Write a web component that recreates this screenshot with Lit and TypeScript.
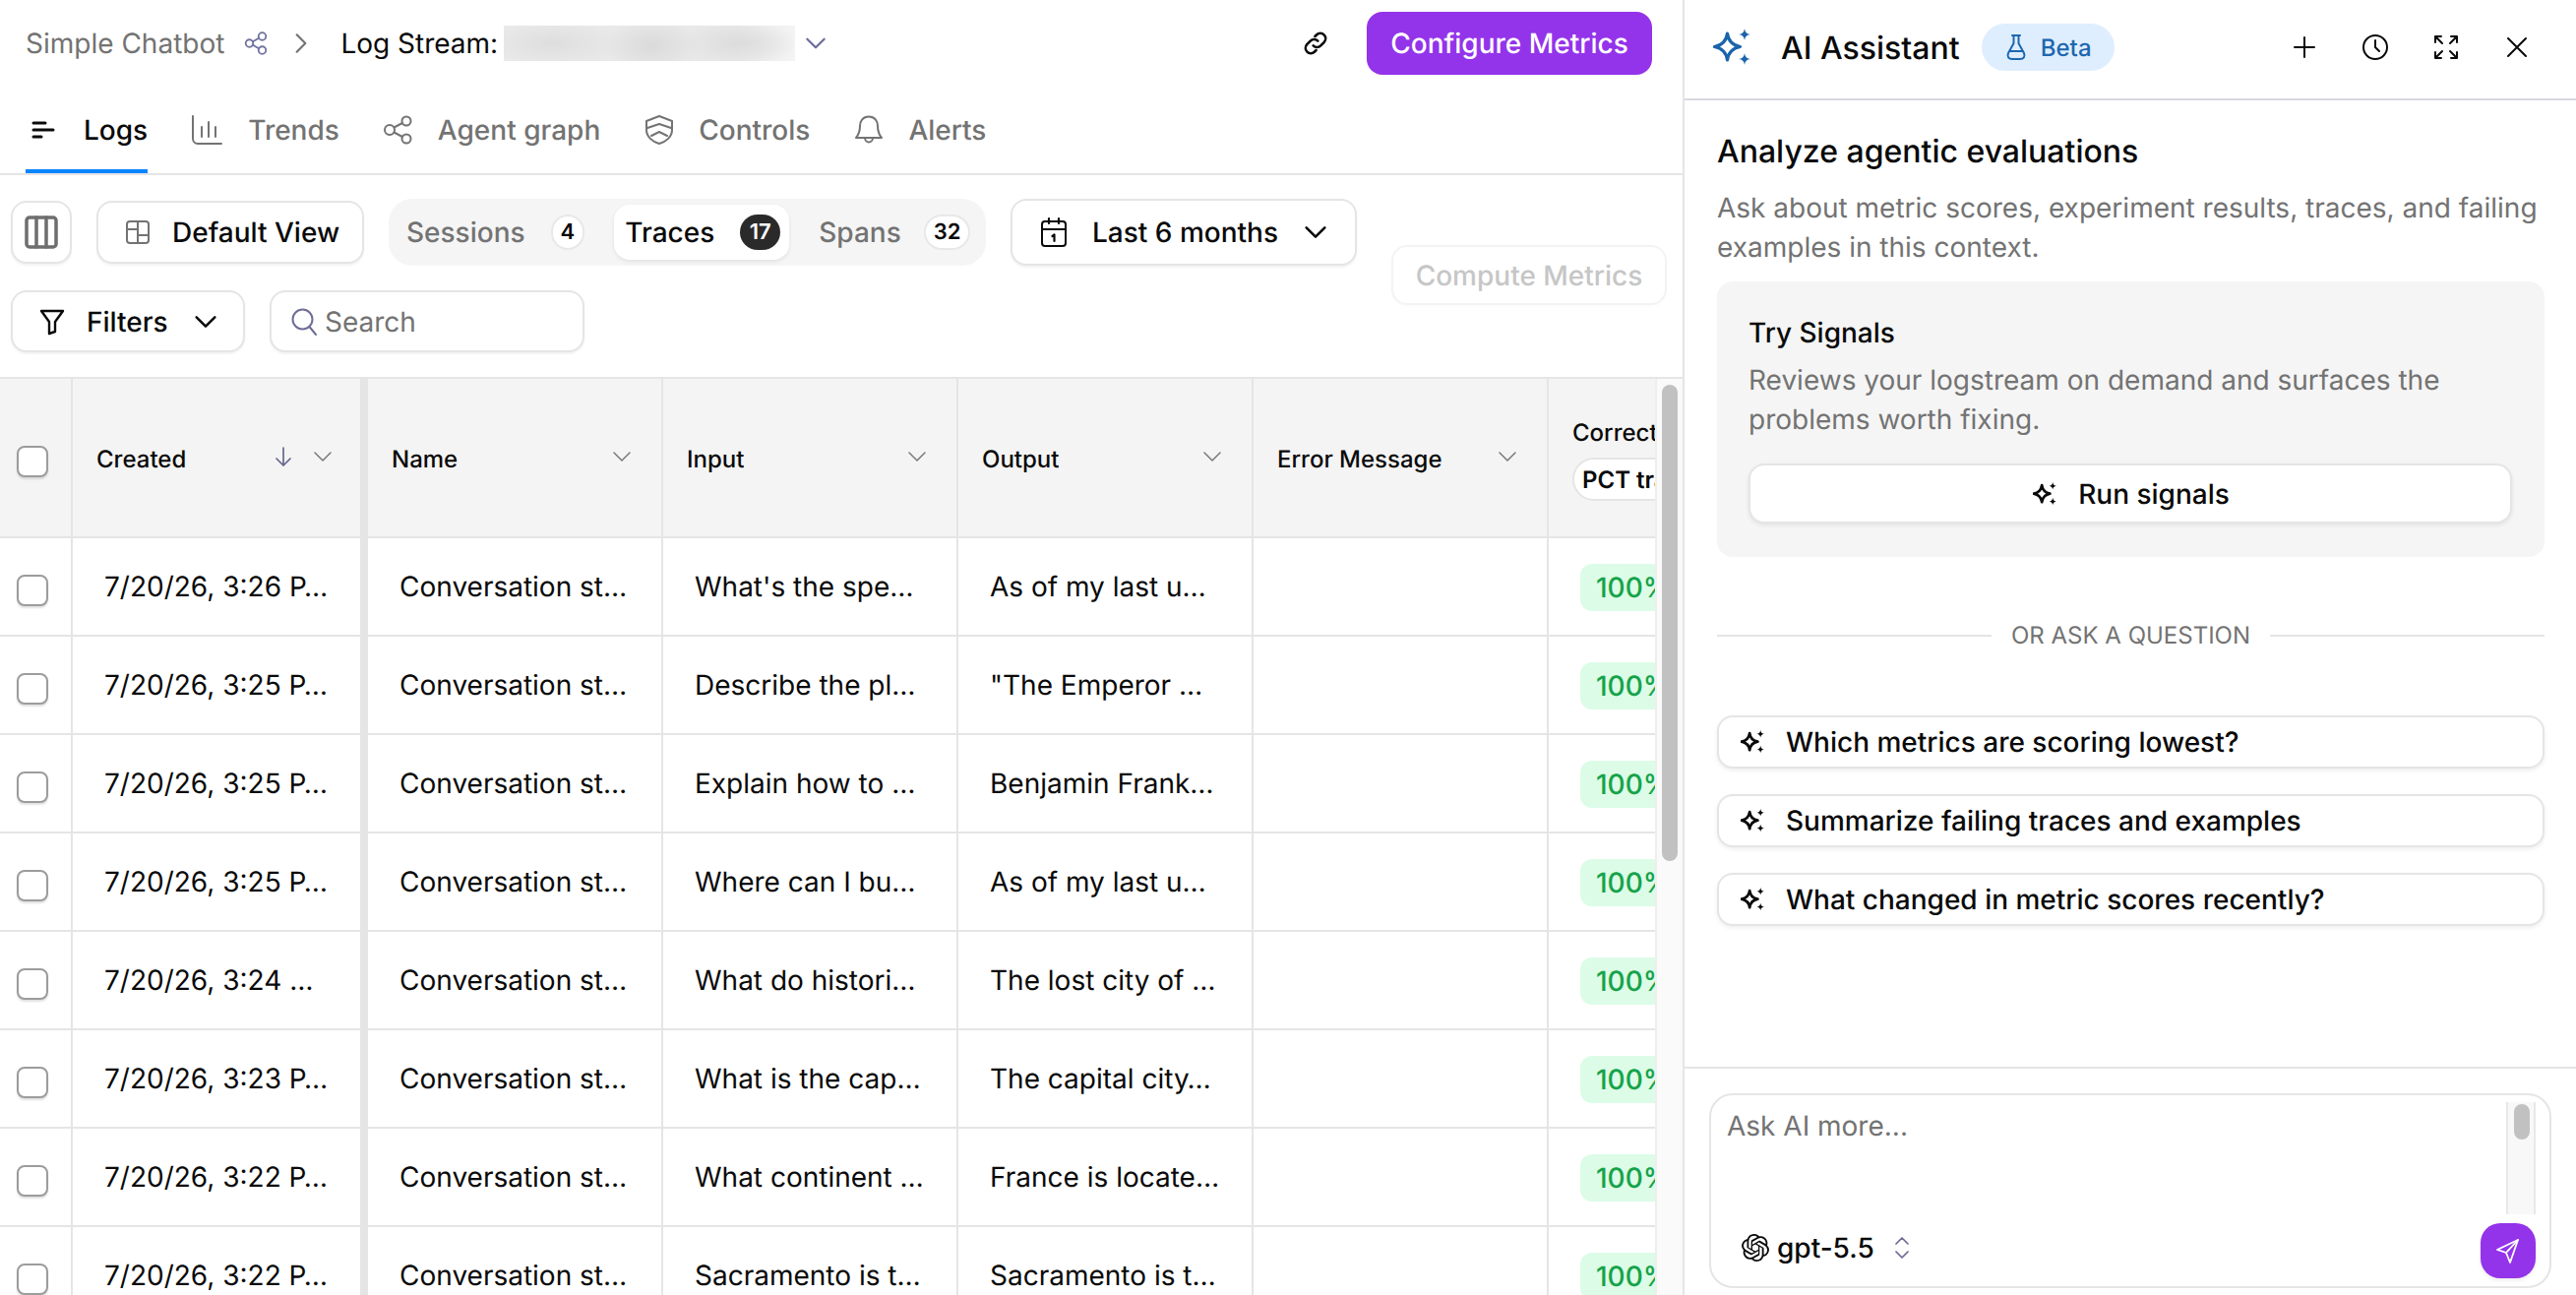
import { LitElement, html, css } from "lit";
import { customElement } from "lit/decorators.js";

const sparkle = html`<svg class="spark" viewBox="0 0 38 38"><path class="sbig" d="M14.500 5C15.500 12.500 20 17 27.500 18.500C20 20 15.500 24.500 14.500 32C13.500 24.500 9 20 1.500 18.500C9 17 13.500 12.500 14.500 5Z"/><path class="ssm" d="M32 0C32.400 3.600 34.400 5.600 38 6C34.400 6.400 32.400 8.400 32 12C31.600 8.400 29.600 6.400 26 6C29.600 5.600 31.600 3.600 32 0Z"/><path class="ssm" d="M32 25C32.400 28.600 34.400 30.600 38 31C34.400 31.400 32.400 33.400 32 37C31.600 33.400 29.600 31.400 26 31C29.600 30.600 31.600 28.600 32 25Z"/></svg>`;
const chev = html`<svg class="chev" viewBox="0 0 24 24"><path d="M4 8L12 16L20 8"/></svg>`;
const rows = [
  ["7/20/26, 3:26 P…", "What's the spe…", "As of my last u…"],
  ["7/20/26, 3:25 P…", "Describe the pl…", "\"The Emperor …"],
  ["7/20/26, 3:25 P…", "Explain how to …", "Benjamin Frank…"],
  ["7/20/26, 3:25 P…", "Where can I bu…", "As of my last u…"],
  ["7/20/26, 3:24 …", "What do histori…", "The lost city of …"],
  ["7/20/26, 3:23 P…", "What is the cap…", "The capital city…"],
  ["7/20/26, 3:22 P…", "What continent …", "France is locate…"],
  ["7/20/26, 3:22 P…", "Sacramento is t…", "Sacramento is t…"],
];
const questions = ["Which metrics are scoring lowest?", "Summarize failing traces and examples", "What changed in metric scores recently?"];

@customElement("app-root")
export class AppRoot extends LitElement {
  static styles = css`
    :host { display: flex; width: 2618px; height: 1316px; overflow: hidden; background: #fff; color: #0a0a0a; font-family: Inter, "Liberation Sans", sans-serif; font-size: 28px; text-rendering: geometricPrecision; }
    * { box-sizing: border-box; }
    svg { display: block; flex: none; fill: none; stroke: currentColor; stroke-width: 2; stroke-linecap: round; stroke-linejoin: round; }
    .left { width: 1712px; height: 1316px; border-right: 2px solid #e5e5e5; display: flex; flex-direction: column; overflow: hidden; flex: none; }
    .top { height: 88px; flex: none; display: flex; align-items: center; padding: 0 31px 0 26px; }
    .crumb { color: #737373; white-space: nowrap; }
    .share { width: 26px; height: 26px; margin-left: 19px; color: #7272a0; stroke-width: 1.700; }
    .crumbsep { width: 26px; height: 26px; margin: 0 27px 0 20px; color: #737373; }
    .stream { white-space: nowrap; font-weight: 400; }
    .blur { width: 296px; height: 36px; margin-left: 6px; background: radial-gradient(ellipse 50px 26px at 150px 20px, #dadada, transparent), radial-gradient(ellipse 60px 22px at 240px 18px, #dcdcdc, transparent), radial-gradient(ellipse 70px 24px at 50px 18px, #dedede, transparent), linear-gradient(90deg, #eaeaea, #e8e8e8 80%, #f4f4f4); }
    .downc { width: 26px; height: 26px; margin-left: 8px; color: #6b6b9b; }
    .spacer { flex: 1; }
    .link { width: 28px; height: 28px; margin-right: 38px; stroke-width: 2.200; }
    .cta { height: 64px; width: 290px; border-radius: 16px; background: #9333ea; color: #fff; font-weight: 500; display: flex; align-items: center; justify-content: center; white-space: nowrap; }
    .tabs { height: 90px; flex: none; display: flex; border-bottom: 2px solid #e5e5e5; padding-left: 26px; gap: 44px; }
    .tab { display: flex; align-items: center; gap: 24px; color: #737373; font-weight: 500; white-space: nowrap; height: 88px; }
    .tab:nth-child(2) { gap: 26px; }
    .tab svg { width: 32px; height: 32px; margin-top: -1px; }
    .tab.on { color: #0a0a0a; border-bottom: 4px solid #0a84ff; padding-top: 4px; gap: 27px; }
    .tab.on svg { color: #0a0a0a; }
    .toolbar { height: 205px; flex: none; padding: 24px 16px 0 11px; display: flex; justify-content: space-between; align-items: flex-start; }
    .tcol { display: flex; flex-direction: column; gap: 25px; }
    .trow { display: flex; align-items: center; gap: 25px; height: 68px; }
    .trow.two { height: 63px; gap: 25px; }
    .btn { display: flex; align-items: center; height: 64px; border: 2px solid #e5e5e5; border-radius: 16px; background: #fff; box-shadow: 0 2px 2px rgba(0,0,0,.05); font-weight: 500; white-space: nowrap; }
    .cols { width: 62px; justify-content: center; color: #6e6e6e; }
    .cols svg { width: 36px; height: 36px; }
    .view { width: 272px; padding-left: 26px; gap: 21px; }
    .view svg { width: 28px; height: 28px; color: #737373; }
    .seg { height: 68px; background: #f5f5f5; border-radius: 24px; display: flex; align-items: center; gap: 18px; padding: 0 8px 0 6px; width: 607px; }
    .sitem { display: flex; align-items: center; gap: 26px; height: 56px; padding: 0 12px; border-radius: 16px; color: #737373; font-weight: 500; white-space: nowrap; }
    .sitem.on { background: #fff; color: #0a0a0a; box-shadow: 0 2px 4px rgba(0,0,0,.08); padding: 0 9px 0 11px; }
    .sitem:last-child { gap: 23px; }
    .bdg { height: 36px; min-width: 32px; padding: 0 8px; border-radius: 18px; background: #fff; border: 2px solid #e8e8e8; color: #0a0a0a; font-size: 22px; font-weight: 600; display: flex; align-items: center; justify-content: center; }
    .bdg.dark { background: #2a2a2a; color: #fff; border: none; width: 41px; }
    .date { height: 68px; width: 352px; padding-left: 27px; gap: 24px; }
    .date svg.cal { width: 30px; height: 32px; }
    .date .chev { width: 28px; height: 28px; color: #0a0a0a; stroke-width: 2.200; }
    .filters { width: 238px; height: 63px; padding-left: 26px; gap: 21px; }
    .filters .fn { width: 28px; height: 28px; }
    .filters .chev { width: 28px; height: 28px; margin-left: 3px; stroke-width: 2.200; }
    .search { width: 320px; height: 63px; padding-left: 19px; gap: 7px; color: #737373; font-weight: 400; }
    .search svg { width: 28px; height: 30px; color: #6e6e96; }
    .compute { width: 280px; height: 61px; margin-top: 47px; border: 2px solid #f3f3f3; border-radius: 16px; color: #c6c6c6; font-weight: 500; display: flex; align-items: center; justify-content: center; white-space: nowrap; box-shadow: 0 2px 2px rgba(0,0,0,.015); }
    .tablewrap { flex: 1; min-height: 0; display: flex; border-top: 2px solid #e5e5e5; overflow: hidden; }
    .grid { width: 1682px; flex: none; overflow: hidden; }
    .row { display: flex; width: 1874px; height: 100px; border-bottom: 2px solid #e5e5e5; align-items: stretch; }
    .row.head { height: 162px; background: #f4f4f4; font-size: 24px; font-weight: 500; }
    .cell { flex: none; width: 300px; border-right: 2px solid #e5e5e5; display: flex; align-items: center; padding-left: 32px; white-space: nowrap; overflow: hidden; }
    .cell.ck { width: 74px; padding-left: 17px; }
    .cell.created { border-right-width: 8px; }
    .head .cell { padding: 2px 28px 0 24px; justify-content: space-between; }
    .head .cell.created { padding-right: 26px; }
    .head .cell.ck { padding: 0 0 0 17px; justify-content: flex-start; }
    .head .chev { width: 24px; height: 24px; color: #777; stroke-width: 1.500; margin-top: -4px; }
    .hicons { display: flex; align-items: center; gap: 16px; }
    .arrow { width: 24px; height: 24px; color: #66668f; stroke-width: 1.700; margin-top: -4px; }
    .box { width: 32px; height: 32px; margin-top: 7px; border: 2px solid #9c9c9c; border-radius: 8px; background: #fff; box-shadow: 0 2px 2px rgba(0,0,0,.12); }
    .head .cell.corr { flex-direction: column; align-items: flex-start; justify-content: flex-start; padding: 28px 0 0 24px; border-right: none; }
    .corrt { line-height: 36px; margin-top: 9px; }
    .pct { height: 44px; margin-top: 7px; border: 2px solid #e5e5e5; border-radius: 22px; background: #fff; display: flex; align-items: center; padding: 0 8px; font-weight: 600; white-space: nowrap; }
    .score { height: 48px; margin-top: 2px; padding: 0 16px; border-radius: 12px; background: #dcfce7; color: #16a34a; font-weight: 500; display: flex; align-items: center; }
    .track { width: 28px; flex: none; background: #fafafa; border-left: 2px solid #eeeeee; padding: 6px 5px 0 5px; }
    .thumb { width: 16px; height: 484px; border-radius: 8px; background: #c1c1c1; }
    .right { flex: 1; min-width: 0; height: 1316px; display: flex; flex-direction: column; }
    .rhead { height: 102px; flex: none; border-bottom: 2px solid #d8d8e2; display: flex; align-items: center; padding: 0 46px 4px 29px; }
    .rlogo { width: 38px; height: 38px; color: #1b64ac; }
    .spark { width: 100%; height: 100%; }
    .sbig { stroke-width: 3.200; } .ssm { fill: currentColor; stroke: none; }
    .rtitle { margin-left: 31px; font-size: 32px; font-weight: 500; white-space: nowrap; }
    .beta { margin-left: 22px; height: 48px; width: 135px; border-radius: 24px; background: #dfeefe; color: #1c67b0; display: flex; align-items: center; justify-content: center; gap: 13px; font-size: 24px; font-weight: 500; }
    .beta svg { width: 24px; height: 28px; stroke-width: 2; }
    .ricons { display: flex; gap: 44px; }
    .ricons svg { width: 28px; height: 28px; stroke-width: 2; }
    .rbody { flex: 1; min-height: 0; padding: 32px 32px 0 33px; }
    .h2 { font-size: 32px; font-weight: 500; line-height: 40px; }
    .desc { color: #737373; line-height: 40px; margin-top: 17px; }
    .card { margin-top: 15px; height: 280px; border-radius: 16px; background: #f5f5f5; padding: 32px 33px 0 32px; }
    .card h3 { margin: 0; font-size: 28px; font-weight: 500; line-height: 40px; }
    .card p { margin: 8px 0 0; color: #737373; line-height: 40px; }
    .run { margin-top: 25px; height: 61px; border: 2px solid #e5e5e5; border-radius: 16px; background: #fff; box-shadow: 0 2px 4px rgba(0,0,0,.08); display: flex; align-items: center; justify-content: center; gap: 22px; font-weight: 500; padding-left: 2px; }
    .small { width: 24px; height: 24px; }
    .small .sbig { stroke-width: 4.400; }
    .divider { margin-top: 60px; display: flex; align-items: center; gap: 20px; color: #737373; font-size: 24px; line-height: 40px; white-space: nowrap; }
    .divider i { flex: 1; height: 2px; background: #e5e5e5; }
    .qs { margin-top: 61px; display: flex; flex-direction: column; gap: 26px; }
    .q { height: 54px; border: 2px solid #e5e5e5; border-radius: 16px; background: #fff; box-shadow: 0 2px 4px rgba(0,0,0,.07); display: flex; align-items: center; gap: 22px; padding-left: 22px; font-weight: 500; white-space: nowrap; }
    .rfoot { height: 232px; flex: none; border-top: 2px solid #e5e5e5; padding: 25px 25px 7px 25px; }
    .inbox { height: 198px; border: 2px solid #e5e5e5; border-radius: 24px; padding: 7px 14px 0 16px; display: flex; flex-direction: column; }
    .intop { height: 114px; flex: none; display: flex; justify-content: space-between; }
    .ph { color: #737373; line-height: 40px; margin-top: 4px; }
    .sb { width: 30px; height: 114px; background: #f8f8f8; border-left: 2px solid #e8e8e8; border-right: 2px solid #e8e8e8; padding: 2px 6px; }
    .sb div { width: 16px; height: 36px; border-radius: 8px; background: #c1c1c1; }
    .inbot { margin-top: 9px; display: flex; align-items: center; height: 56px; padding-left: 15px; }
    .oai { width: 28px; height: 30px; fill: #0a0a0a; stroke: none; margin-top: -6px; }
    .model { margin-left: 8px; margin-top: -7px; font-weight: 500; }
    .updown { width: 20px; height: 24px; margin-left: 18px; margin-top: -6px; color: #6b6b95; stroke-width: 1.700; }
    .send { margin-left: auto; width: 56px; height: 56px; border-radius: 20px; background: #9333ea; color: #fff; display: flex; align-items: center; justify-content: center; box-shadow: 0 2px 4px rgba(0,0,0,.08); }
    .send svg { width: 30px; height: 30px; stroke-width: 1.800; }
  `;

  render() {
    return html`
      <div class="left">
        <div class="top">
          <span class="crumb">Simple Chatbot</span>
          <svg class="share" viewBox="0 0 24 24"><circle cx="6" cy="12" r="3.500"/><circle cx="18" cy="5.500" r="3.500"/><circle cx="18" cy="18.500" r="3.500"/><path d="M9.200 10.400L14.800 7.100M9.200 13.600L14.800 16.900"/></svg>
          <svg class="crumbsep" viewBox="0 0 24 24"><path d="M8 4L16 12L8 20"/></svg>
          <span class="stream">Log Stream:</span>
          <div class="blur"></div>
          <svg class="downc" viewBox="0 0 24 24"><path d="M4 8L12 16L20 8"/></svg>
          <div class="spacer"></div>
          <svg class="link" viewBox="0 0 24 24"><path d="M10 14a4.500 4.500 0 0 0 6.500 0l3-3a4.600 4.600 0 0 0-6.500-6.500l-1.500 1.500"/><path d="M14 10a4.500 4.500 0 0 0-6.500 0l-3 3a4.600 4.600 0 0 0 6.500 6.500l1.500-1.500"/></svg>
          <div class="cta">Configure Metrics</div>
        </div>
        <div class="tabs">
          <div class="tab on"><svg viewBox="0 0 32 32"><path d="M8 9H20M8 16H28M8 23H16" stroke-width="3"/></svg>Logs</div>
          <div class="tab"><svg viewBox="0 0 32 32"><path d="M2 2V25a5 5 0 0 0 5 5H31M11 13V23M18 8V23M25 13V23" /></svg>Trends</div>
          <div class="tab"><svg viewBox="0 0 32 32"><circle cx="7" cy="16" r="5"/><circle cx="24" cy="7" r="4.500"/><circle cx="24" cy="25" r="4.500"/><path d="M11.500 13.500L20 9M11.500 18.500L20 23"/></svg>Agent graph</div>
          <div class="tab"><svg viewBox="0 0 32 32"><path d="M16 2L29 7V16C29 23 23 28 16 30C9 28 3 23 3 16V7Z"/><path d="M4 14L16 10L28 14M8 22L16 18L24 22"/></svg>Controls</div>
          <div class="tab"><svg viewBox="0 0 32 32"><path d="M16 2.500C10 2.500 7 7 7 12C7 18 5.500 21 3 24H29C26.500 21 25 18 25 12C25 7 22 2.500 16 2.500Z"/><path d="M12 24a4 4.500 0 0 0 8 0"/></svg>Alerts</div>
        </div>
        <div class="toolbar">
          <div class="tcol">
            <div class="trow">
              <div class="btn cols"><svg viewBox="0 0 36 36"><rect x="3" y="3" width="30" height="30" rx="3" stroke-width="3.500"/><path d="M13 3V33M23 3V33" stroke-width="3.500"/></svg></div>
              <div class="btn view"><svg viewBox="0 0 28 28"><rect x="3" y="3" width="22" height="22" rx="3"/><path d="M3 11H14M14 3V25M14 17H25"/></svg>Default View</div>
              <div class="seg">
                <div class="sitem">Sessions<span class="bdg">4</span></div>
                <div class="sitem on">Traces<span class="bdg dark">17</span></div>
                <div class="sitem">Spans<span class="bdg">32</span></div>
              </div>
              <div class="btn date"><svg class="cal" viewBox="0 0 30 32"><rect x="3" y="5" width="24" height="25" rx="3"/><path d="M3 13H27M10 2V7M20 2V7M13.500 20L15.500 18.500V25" stroke-width="2.200"/></svg>Last 6 months${chev}</div>
            </div>
            <div class="trow two">
              <div class="btn filters"><svg class="fn" viewBox="0 0 28 28"><path d="M3 3H25L17 14V24L11 26V14Z" stroke-width="2.400"/></svg>Filters${chev}</div>
              <div class="btn search"><svg viewBox="0 0 28 30"><circle cx="12.500" cy="12.500" r="10"/><path d="M19.500 20L26 28"/></svg>Search</div>
            </div>
          </div>
          <div class="compute">Compute Metrics</div>
        </div>
        <div class="tablewrap">
          <div class="grid">
            <div class="row head">
              <div class="cell ck"><div class="box"></div></div>
              <div class="cell created"><span>Created</span><span class="hicons"><svg class="arrow" viewBox="0 0 24 24"><path d="M12 3V21M5 14L12 21L19 14"/></svg>${chev}</span></div>
              ${["Name", "Input", "Output", "Error Message"].map((h) => html`<div class="cell"><span>${h}</span>${chev}</div>`)}
              <div class="cell corr"><span class="corrt">Correctness</span><span class="pct">PCT traces</span></div>
            </div>
            ${rows.map((r) => html`
              <div class="row">
                <div class="cell ck"><div class="box"></div></div>
                <div class="cell created">${r[0]}</div>
                <div class="cell">Conversation st…</div>
                <div class="cell">${r[1]}</div>
                <div class="cell">${r[2]}</div>
                <div class="cell"></div>
                <div class="cell"><span class="score">100%</span></div>
              </div>`)}
          </div>
          <div class="track"><div class="thumb"></div></div>
        </div>
      </div>
      <div class="right">
        <div class="rhead">
          <div class="rlogo">${sparkle}</div>
          <span class="rtitle">AI Assistant</span>
          <span class="beta"><svg viewBox="0 0 24 28"><path d="M8 2H16M9.500 2V10L4 20C2.500 23.500 4.500 26 8 26H16C19.500 26 21.500 23.500 20 20L14.500 10V2M6 18H18"/></svg>Beta</span>
          <div class="spacer"></div>
          <div class="ricons">
            <svg viewBox="0 0 28 28"><path d="M14 4V24M4 14H24"/></svg>
            <svg viewBox="0 0 28 28"><circle cx="14" cy="14" r="12"/><path d="M14 7V14L18 18"/></svg>
            <svg viewBox="0 0 28 28"><path d="M3 9V3H9M3 3L10 10M25 9V3H19M25 3L18 10M3 19V25H9M3 25L10 18M25 19V25H19M25 25L18 18"/></svg>
            <svg viewBox="0 0 28 28"><path d="M5 5L23 23M23 5L5 23"/></svg>
          </div>
        </div>
        <div class="rbody">
          <div class="h2">Analyze agentic evaluations</div>
          <div class="desc">Ask about metric scores, experiment results, traces, and failing examples in this context.</div>
          <div class="card">
            <h3>Try Signals</h3>
            <p>Reviews your logstream on demand and surfaces the problems worth fixing.</p>
            <div class="run"><div class="small">${sparkle}</div>Run signals</div>
          </div>
          <div class="divider"><i></i><span>OR ASK A QUESTION</span><i></i></div>
          <div class="qs">
            ${questions.map((q) => html`<div class="q"><div class="small">${sparkle}</div>${q}</div>`)}
          </div>
        </div>
        <div class="rfoot">
          <div class="inbox">
            <div class="intop"><div class="ph">Ask AI more...</div><div class="sb"><div></div></div></div>
            <div class="inbot">
              <svg class="oai" viewBox="0 0 24 24"><path d="M22.2819 9.8211a5.9847 5.9847 0 0 0-.5157-4.9108 6.0462 6.0462 0 0 0-6.5098-2.9A6.0651 6.0651 0 0 0 4.9807 4.1818a5.9847 5.9847 0 0 0-3.9977 2.9 6.0462 6.0462 0 0 0 .7427 7.0966 5.98 5.98 0 0 0 .511 4.9107 6.051 6.051 0 0 0 6.5146 2.9001A5.9847 5.9847 0 0 0 13.2599 24a6.0557 6.0557 0 0 0 5.7718-4.2058 5.9894 5.9894 0 0 0 3.9977-2.9001 6.0557 6.0557 0 0 0-.7475-7.0729zm-9.022 12.6081a4.4755 4.4755 0 0 1-2.8764-1.0408l.1419-.0804 4.7783-2.7582a.7948.7948 0 0 0 .3927-.6813v-6.7369l2.02 1.1686a.071.071 0 0 1 .038.052v5.5826a4.504 4.504 0 0 1-4.4945 4.4944zm-9.6607-4.1254a4.4708 4.4708 0 0 1-.5346-3.0137l.142.0852 4.783 2.7582a.7712.7712 0 0 0 .7806 0l5.8428-3.3685v2.3324a.0804.0804 0 0 1-.0332.0615L9.74 19.9502a4.4992 4.4992 0 0 1-6.1408-1.6464zM2.3408 7.8956a4.485 4.485 0 0 1 2.3655-1.9728V11.6a.7664.7664 0 0 0 .3879.6765l5.8144 3.3543-2.0201 1.1685a.0757.0757 0 0 1-.071 0l-4.8303-2.7865A4.504 4.504 0 0 1 2.3408 7.872zm16.5963 3.8558L13.1038 8.364 15.1192 7.2a.0757.0757 0 0 1 .071 0l4.8303 2.7913a4.4944 4.4944 0 0 1-.6765 8.1042v-5.6772a.79.79 0 0 0-.407-.667zm2.0107-3.0231l-.142-.0852-4.7735-2.7818a.7759.7759 0 0 0-.7854 0L9.409 9.2297V6.8974a.0662.0662 0 0 1 .0284-.0615l4.8303-2.7866a4.4992 4.4992 0 0 1 6.6802 4.66zM8.3065 12.863l-2.02-1.1638a.0804.0804 0 0 1-.038-.0567V6.0742a4.4992 4.4992 0 0 1 7.3757-3.4537l-.142.0805L8.704 5.459a.7948.7948 0 0 0-.3927.6813zm1.0976-2.3654l2.602-1.4998 2.6069 1.4998v2.9994l-2.5974 1.4997-2.6067-1.4997Z"/></svg>
              <span class="model">gpt-5.5</span>
              <svg class="updown" viewBox="0 0 20 24"><path d="M4 8L10 2L16 8M4 16L10 22L16 16"/></svg>
              <div class="send"><svg viewBox="0 0 30 30"><path d="M25 4L4 14L13 17L17 27Z"/><path d="M13 17L25 4"/></svg></div>
            </div>
          </div>
        </div>
      </div>
    `;
  }
}
